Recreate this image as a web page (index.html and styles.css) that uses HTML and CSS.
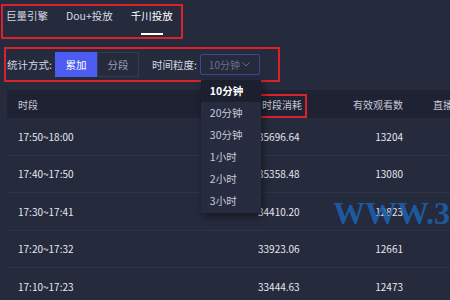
FILE: index.html
```html
<!DOCTYPE html>
<html lang="zh-CN">
<head>
    <meta charset="UTF-8">
    <title>千川投放</title>
    <link rel="stylesheet" href="styles.css">
</head>
<body>
    <!-- Top Tabs -->
    <nav class="tabs">
        <div class="tab">巨量引擎</div>
        <div class="tab">Dou+投放</div>
        <div class="tab active">千川投放</div>
    </nav>

    <!-- Filter Bar -->
    <div class="filters">
        <span class="label">统计方式:</span>
        <button class="seg-btn on">累加</button>
        <button class="seg-btn">分段</button>
        <span class="label label-gap">时间粒度:</span>
        <div class="select">
            <span>10分钟</span>
            <svg class="chevron" width="8" height="5" viewBox="0 0 8 5">
                <path d="M0.5 0.5 L4 4 L7.5 0.5" fill="none" stroke="#6b7088" stroke-width="1"/>
            </svg>
            <ul class="menu">
                <li class="current">10分钟</li>
                <li>20分钟</li>
                <li>30分钟</li>
                <li>1小时</li>
                <li>2小时</li>
                <li>3小时</li>
            </ul>
        </div>
    </div>

    <!-- Data Table -->
    <div class="table">
        <div class="row head">
            <div class="cell first">时段</div>
            <div class="cell mark-cell"><span class="mark">时段消耗</span></div>
            <div class="cell num">有效观看数</div>
            <div class="cell last">直播</div>
        </div>
        <div class="row">
            <div class="cell first">17:50~18:00</div>
            <div class="cell">35696.64</div>
            <div class="cell num">13204</div>
            <div class="cell last"></div>
        </div>
        <div class="row">
            <div class="cell first">17:40~17:50</div>
            <div class="cell">35358.48</div>
            <div class="cell num">13080</div>
            <div class="cell last"></div>
        </div>
        <div class="row">
            <div class="cell first">17:30~17:41</div>
            <div class="cell">34410.20</div>
            <div class="cell num">12823</div>
            <div class="cell last"></div>
        </div>
        <div class="row">
            <div class="cell first">17:20~17:32</div>
            <div class="cell">33923.06</div>
            <div class="cell num">12661</div>
            <div class="cell last"></div>
        </div>
        <div class="row">
            <div class="cell first">17:10~17:23</div>
            <div class="cell">33444.63</div>
            <div class="cell num">12473</div>
            <div class="cell last"></div>
        </div>
    </div>

    <div class="watermark">WWW.3</div>
</body>
</html>
```

FILE: styles.css
```css
/* Basic Styling */
body {
    margin: 0;
    width: 450px;
    height: 300px;
    overflow: hidden;
    position: relative;
    background-color: #252a3d;
    color: #e6e8ef;
    font-family: "Noto Sans CJK SC", "Noto Sans", sans-serif;
    font-size: 10.5px;
}

/* Tabs */
.tabs {
    display: flex;
    gap: 18px;
    box-sizing: border-box;
    width: 182px;
    height: 35px;
    margin: 4px 0 0 1px;
    padding: 3px 0 0 3px;
    border: 2px solid #d9222b;
}

.tab {
    display: flex;
    flex-direction: column;
    align-items: center;
    line-height: 14px;
    color: #d6d8e1;
}

.tab.active {
    color: #ffffff;
}

.tab.active::after {
    content: "";
    width: 22px;
    height: 2px;
    margin-top: 10px;
    background: #ffffff;
}

/* Filter bar */
.filters {
    display: flex;
    align-items: center;
    box-sizing: border-box;
    width: 276px;
    height: 35px;
    margin: 8px 0 0 4px;
    padding-left: 1px;
    border: 2px solid #d9222b;
}

.label {
    color: #d6d8e1;
    margin-right: 3px;
}

.label-gap {
    margin-left: 13px;
}

.seg-btn {
    width: 42px;
    height: 25px;
    font-family: inherit;
    font-size: 10.5px;
    background: transparent;
    border: 1px solid #353a51;
    color: #9a9eb2;
    padding: 0;
}

.seg-btn.on {
    background-color: #4c5cf0;
    border-color: #4c5cf0;
    color: #ffffff;
}

.select {
    position: relative;
    display: flex;
    align-items: center;
    justify-content: space-between;
    box-sizing: border-box;
    width: 60px;
    height: 21px;
    padding: 0 9px 0 8px;
    border: 1px solid #3b4895;
    border-radius: 2px;
    color: #6b7088;
    font-size: 10px;
    white-space: nowrap;
}

.menu {
    position: absolute;
    top: 24px;
    left: 0;
    width: 60px;
    margin: 0;
    padding: 1px 0;
    list-style: none;
    background-color: #272b3f;
    box-shadow: 2px 3px 8px rgba(0, 0, 0, 0.45);
    z-index: 2;
    font-size: 10.5px;
}

.menu li {
    height: 22px;
    line-height: 22px;
    padding-left: 9px;
    color: #c9ccd7;
}

.menu li.current {
    background-color: #1c1f2e;
    color: #ffffff;
    font-weight: bold;
}

/* Table */
.table {
    margin: 8px 0 0 7px;
    font-size: 10px;
}

.row {
    display: grid;
    grid-template-columns: 251px 80px 65px 1fr;
    align-items: center;
    height: 37.5px;
    box-sizing: border-box;
    border-bottom: 1px solid #2e3349;
    white-space: nowrap;
}

.row.head {
    height: 28px;
    border-bottom: none;
    background-color: #1f2233;
    color: #c5c8d4;
}

.cell.first {
    padding-left: 11px;
}

.cell.num {
    text-align: right;
}

.cell.last {
    padding-left: 30px;
}

.mark-cell {
    align-self: end;
}

.mark {
    display: inline-block;
    box-sizing: border-box;
    width: 49px;
    height: 24px;
    line-height: 18px;
    padding-left: 2px;
    border: 2px solid #d9222b;
}

/* Watermark */
.watermark {
    position: absolute;
    left: 333px;
    top: 197px;
    font-family: "Liberation Serif", serif;
    font-weight: bold;
    font-size: 32px;
    line-height: 32px;
    color: rgba(28, 98, 176, 0.85);
    white-space: nowrap;
    pointer-events: none;
}
```
